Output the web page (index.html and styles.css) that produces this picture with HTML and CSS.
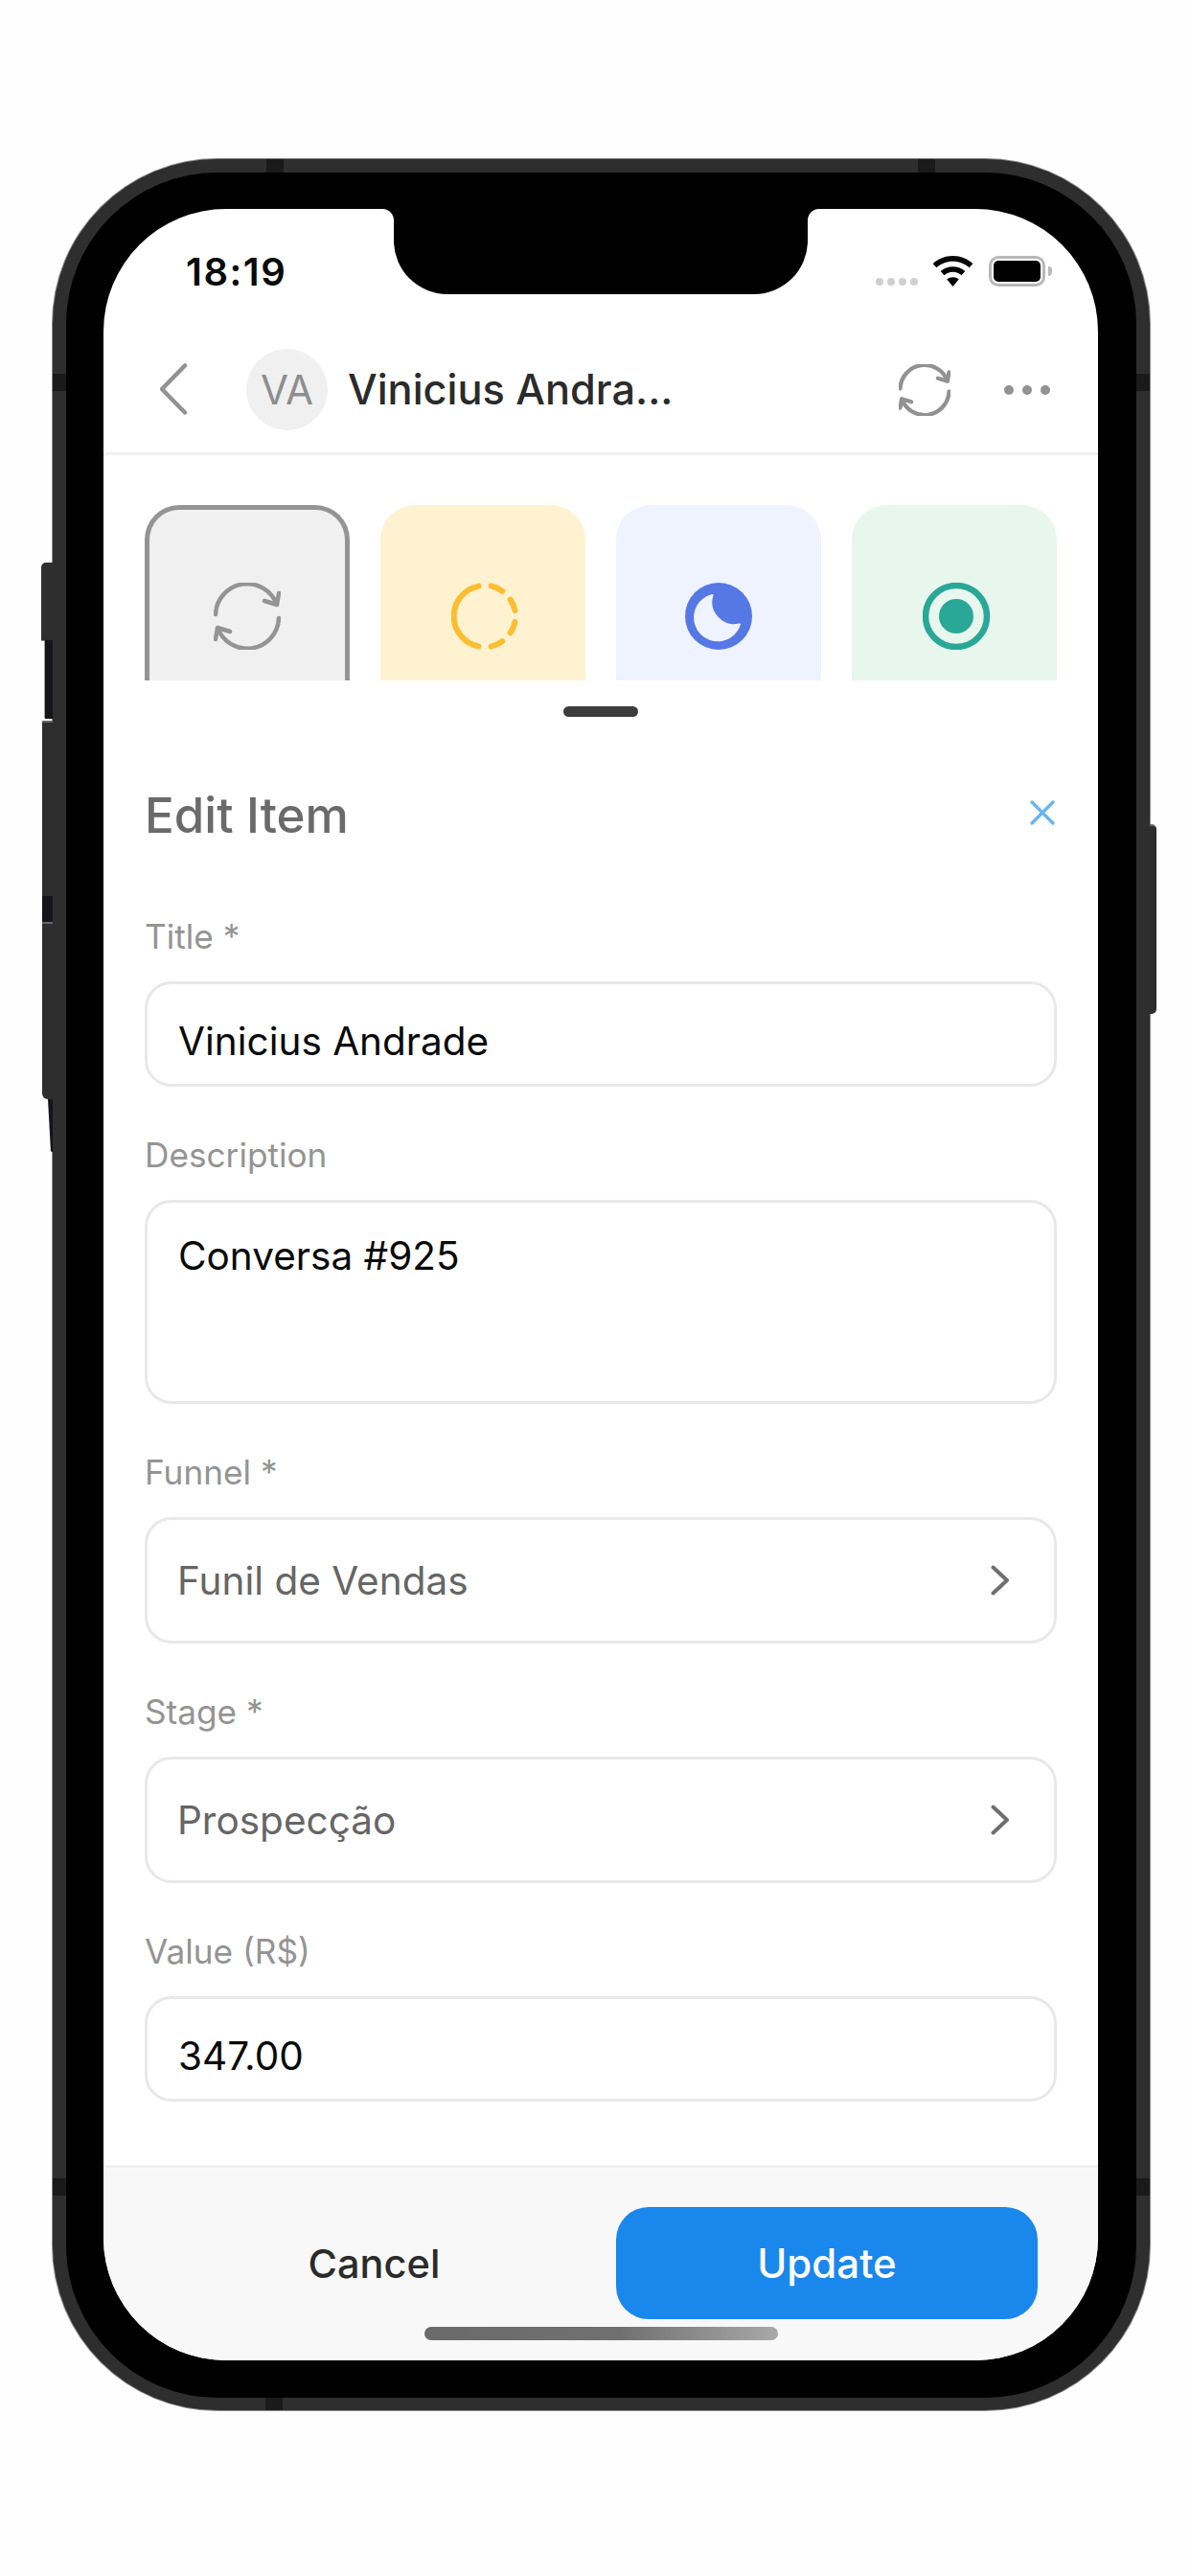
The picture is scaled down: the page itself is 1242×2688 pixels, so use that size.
FILE: index.html
```html
<!DOCTYPE html>
<html lang="en">
<head>
<meta charset="utf-8">
<title>Edit Item</title>
<link rel="stylesheet" href="styles.css">
</head>
<body>
<div class="phone">
  <span class="hw hw-silent"></span>
  <span class="hw hw-up"></span>
  <span class="hw hw-down"></span>
  <span class="hw hw-tail"></span>
  <span class="hw hw-power"></span>
  <span class="band band-tl"></span>
  <span class="band band-tr"></span>
  <span class="band band-bl"></span>
  <span class="band band-lt"></span>
  <span class="band band-lb"></span>
  <span class="band band-rt"></span>
  <span class="band band-rb"></span>
  <div class="screen">
    <div class="notch"></div>
    <div class="status">
      <span class="time">18:19</span>
      <div class="status-icons">
        <span class="signal"><i></i><i></i><i></i><i></i></span>
        <svg class="wifi" viewBox="0 0 44 34"><path d="M22 0C13.5 0 6.2 3.2 0.5 8.4L4.4 12.6C9 8.4 15.2 5.9 22 5.9S35 8.4 39.6 12.6L43.5 8.4C37.8 3.2 30.5 0 22 0Z"/><path d="M22 11.5C16.9 11.5 12.3 13.4 8.8 16.6L12.7 20.8C15.2 18.6 18.4 17.3 22 17.3S28.8 18.6 31.3 20.8L35.2 16.6C31.7 13.4 27.1 11.5 22 11.5Z"/><path d="M22 23C19.6 23 17.3 23.9 15.6 25.3L22 33L28.4 25.3C26.7 23.9 24.4 23 22 23Z"/></svg>
        <span class="battery"><span class="battery-fill"></span></span>
        <span class="battery-nub"></span>
      </div>
    </div>
    <header class="topbar">
      <svg class="back" viewBox="0 0 32 54"><path d="M26 2.500L2 27L26 51.500"/></svg>
      <div class="avatar">VA</div>
      <div class="name">Vinicius Andra...</div>
      <svg class="sync-top" viewBox="0 0 70 70"><path d="M2 33A33 33 0 0 1 66 23M53 19L66 23L68 11"/><path d="M68 37A33 33 0 0 1 4 47M17 51L4 47L2 59"/></svg>
      <div class="dots"><i></i><i></i><i></i></div>
    </header>
    <div class="stages">
      <div class="stage stage-grey">
        <svg class="stage-icon" viewBox="0 0 70 70"><path class="sync" d="M2 33A33 33 0 0 1 66 23M53 19L66 23L68 11"/><path class="sync" d="M68 37A33 33 0 0 1 4 47M17 51L4 47L2 59"/></svg>
      </div>
      <div class="stage stage-yellow">
        <svg class="stage-icon" viewBox="0 0 70 70"><path class="dash" d="M28.500 3.600A32 32 0 0 0 28.500 66.400"/><path class="dash" d="M41.600 3.400A32 32 0 0 1 53.300 8.800"/><path class="dash" d="M61.700 17.700A32 32 0 0 1 66.500 29"/><path class="dash" d="M66.500 41A32 32 0 0 1 61.700 52.300"/><path class="dash" d="M53.300 61.200A32 32 0 0 1 41.600 66.600"/></svg>
      </div>
      <div class="stage stage-blue">
        <svg class="stage-icon" viewBox="0 0 70 70"><circle class="moon-disc" cx="35" cy="35" r="35"/><path class="moon-cut" d="M28.500 13A24 24 0 1 0 57 43.500A24 24 0 0 1 28.500 13Z"/></svg>
      </div>
      <div class="stage stage-green">
        <svg class="stage-icon" viewBox="0 0 70 70"><circle class="target-ring" cx="35" cy="35" r="32"/><circle class="target-dot" cx="35" cy="35" r="18"/></svg>
      </div>
    </div>
    <main class="sheet">
      <div class="handle"></div>
      <div class="sheet-head">
        <h1 class="sheet-title">Edit Item</h1>
        <svg class="close" viewBox="0 0 26 26"><path d="M2 2L24 24M24 2L2 24"/></svg>
      </div>
      <form class="form">
        <div class="field">
          <div class="label">Title *</div>
          <div class="input">Vinicius Andrade</div>
        </div>
        <div class="field">
          <div class="label">Description</div>
          <div class="input textarea">Conversa #925</div>
        </div>
        <div class="field">
          <div class="label">Funnel *</div>
          <div class="input select"><span>Funil de Vendas</span><svg class="chev" viewBox="0 0 20 32"><path d="M2.500 2.500L17 16L2.500 29.500"/></svg></div>
        </div>
        <div class="field">
          <div class="label">Stage *</div>
          <div class="input select"><span>Prospecção</span><svg class="chev" viewBox="0 0 20 32"><path d="M2.500 2.500L17 16L2.500 29.500"/></svg></div>
        </div>
        <div class="field">
          <div class="label">Value (R$)</div>
          <div class="input">347.00</div>
        </div>
      </form>
    </main>
    <footer class="footer">
      <div class="btn-cancel">Cancel</div>
      <div class="btn-update">Update</div>
    </footer>
    <div class="home"></div>
  </div>
</div>
</body>
</html>
```
FILE: styles.css
```css
* { box-sizing: border-box; }
html, body { margin: 0; padding: 0; }
body {
  width: 1242px;
  height: 2688px;
  background: #fefefe;
  font-family: Inter, "Liberation Sans", sans-serif;
  overflow: hidden;
  padding: 166px 0 0 55px;
}
.phone {
  position: relative;
  width: 1145px;
  height: 2349px;
  padding: 38px 40px 39px 39px;
  border: 14px solid #2e2e2e;
  border-bottom-width: 13px;
  border-radius: 172px;
  background: #000;
  box-shadow: 0 0 0 1px #8a8a8a;
}
.hw { position: absolute; background: #2e2e2e; }
.hw-silent { left: -26px; top: 407px; width: 12px; height: 163px; border-radius: 5px 0 0 5px; background: linear-gradient(#2e2e2e 50%, #14141a 50%); clip-path: polygon(0 0, 100% 0, 100% 100%, 30% 100%, 30% 50%, 0 50%); }
.hw-up { left: -25px; top: 572px; width: 11px; height: 210px; border-top: 2px solid #666; background: linear-gradient(#2e2e2e 87%, #14141a 87%); }
.hw-down { left: -25px; top: 782px; width: 11px; height: 185px; border-radius: 0 0 0 6px; border-top: 2px solid #666; }
.hw-tail { left: -19px; top: 967px; width: 5px; height: 55px; background: #14141a; border-radius: 0 0 0 5px; clip-path: polygon(0 0, 100% 0, 100% 100%, 60% 100%); }
.hw-power { right: -21px; top: 680px; width: 7px; height: 198px; border-radius: 0 5px 5px 0; border-top: 2px solid #666; }
.band { position: absolute; background: #1a1a1a; }
.band-tl { left: 209px; top: -14px; width: 18px; height: 14px; }
.band-tr { left: 889px; top: -14px; width: 18px; height: 14px; }
.band-bl { left: 208px; bottom: -13px; width: 18px; height: 13px; }
.band-lt { left: -14px; top: 210px; width: 14px; height: 18px; }
.band-lb { left: -14px; top: 2093px; width: 14px; height: 18px; }
.band-rt { right: -14px; top: 210px; width: 14px; height: 18px; }
.band-rb { right: -14px; top: 2093px; width: 14px; height: 18px; }

.screen {
  position: relative;
  width: 100%;
  height: 100%;
  background: #fff;
  border-radius: 128px;
  overflow: hidden;
  display: flex;
  flex-direction: column;
}
.notch {
  position: absolute;
  left: 303px;
  top: 0;
  width: 432px;
  height: 89px;
  background: #000;
  border-radius: 0 0 56px 56px;
}
.notch::before, .notch::after {
  content: "";
  position: absolute;
  top: 0;
  width: 12px;
  height: 12px;
}
.notch::before { left: -12px; background: radial-gradient(circle at 0 100%, transparent 11.5px, #000 12.5px); }
.notch::after { right: -12px; background: radial-gradient(circle at 100% 100%, transparent 11.5px, #000 12.5px); }
.status {
  height: 132px;
  flex: none;
  display: flex;
  justify-content: space-between;
  align-items: flex-start;
  padding: 43px 48px 0 86px;
}
.time {
  font-size: 40px;
  line-height: 46px;
  font-weight: 600;
  letter-spacing: 1.5px;
  color: #0a0a0a;
}
.status-icons { display: flex; align-items: flex-start; padding-top: 6px; }
.signal { display: flex; gap: 4px; margin-top: 23px; margin-right: 15px; }
.signal i { width: 8px; height: 8px; border-radius: 50%; background: #cfcfcf; }
.wifi { width: 43px; height: 33px; margin-right: 16px; fill: #000; }
.battery {
  width: 59px;
  height: 32px;
  border: 3px solid #b8b8b8;
  border-radius: 10px;
  padding: 2px;
}
.battery-fill { display: block; width: 100%; height: 100%; background: #000; border-radius: 5px; }
.battery-nub { width: 4px; height: 10px; background: #b8b8b8; border-radius: 0 4px 4px 0; margin: 11px 0 0 3px; }

.topbar {
  flex: none;
  height: 125px;
  display: flex;
  align-items: flex-start;
  padding: 14px 50px 0 59px;
  border-bottom: 3px solid #f1f1f1;
}
.back { width: 32px; height: 54px; margin-top: 15px; fill: none; stroke: #929292; stroke-width: 4.5; stroke-linecap: round; stroke-linejoin: round; }
.avatar {
  width: 85px;
  height: 85px;
  margin-left: 58px;
  border-radius: 50%;
  background: #f0f0f0;
  color: #8e8e8e;
  font-size: 42px;
  font-weight: 400;
  display: flex;
  align-items: center;
  justify-content: center;
}
.name {
  flex: 1;
  margin-left: 21px;
  font-size: 43.3px;
  line-height: 85px;
  font-weight: 500;
  color: #2b2b2b;
}
.sync-top { width: 54px; height: 54px; margin-top: 16px; fill: none; stroke: #929292; stroke-width: 5.5; stroke-linecap: round; stroke-linejoin: round; }
.dots { display: flex; gap: 9px; margin: 38px 0 0 56px; }
.dots i { width: 10px; height: 10px; border-radius: 50%; background: #929292; }

.stages {
  flex: none;
  display: flex;
  gap: 32px;
  padding: 52px 43px 0;
}
.stage {
  width: 214px;
  height: 183px;
  border-radius: 36px 36px 0 0;
  display: flex;
  justify-content: center;
  padding-top: 81px;
}
.stage-icon { width: 70px; height: 70px; fill: none; }
.stage-grey { background: #f0f0f0; border: 5px solid #949494; border-bottom: 0; padding-top: 76px; }
.stage-yellow { background: #fff2d1; padding-left: 4px; }
.stage-blue { background: #eff3ff; }
.stage-green { background: #e7f7ee; padding-left: 4px; }
.sync { stroke: #949494; stroke-width: 4.5; stroke-linecap: round; stroke-linejoin: round; }
.dash { stroke: #fdbd30; stroke-width: 6; stroke-linecap: round; }
.moon-disc { fill: #5578e5; }
.moon-cut { fill: #eff3ff; stroke: #eff3ff; stroke-width: 2; stroke-linejoin: round; }
.target-ring { stroke: #2aa897; stroke-width: 6.5; }
.target-dot { fill: #2aa897; }

.sheet {
  flex: 1;
  min-height: 0;
  padding: 27px 43px 0;
  display: flex;
  flex-direction: column;
}
.handle { width: 78px; height: 11px; flex: none; align-self: center; border-radius: 6px; background: #3c3c3c; }
.sheet-head {
  flex: none;
  display: flex;
  justify-content: space-between;
  align-items: center;
  height: 60px;
  margin-top: 72px;
  margin-bottom: 76px;
}
.sheet-title { margin: 0; font-size: 51px; font-weight: 500; color: #6a6a6a; }
.close { width: 26px; height: 26px; margin-right: 2px; margin-top: -5px; fill: none; stroke: #67b4f0; stroke-width: 3.2; stroke-linecap: round; }
.form { display: flex; flex-direction: column; gap: 50px; }
.label { font-size: 35.2px; line-height: 42px; color: #949494; margin-bottom: 26px; }
.input {
  height: 110px;
  border: 3px solid #e8e8e8;
  border-radius: 28px;
  padding: 14px 32px 0;
  display: flex;
  align-items: center;
  font-size: 40.5px;
  color: #0a0a0a;
  background: #fff;
}
.textarea { height: 213px; align-items: flex-start; padding-top: 32px; line-height: 48px; }
.select { height: 132px; justify-content: space-between; padding: 0 46px 0 31px; color: #666; }
.chev { width: 20px; height: 32px; fill: none; stroke: #6f6f6f; stroke-width: 4; stroke-linecap: round; stroke-linejoin: round; }

.footer {
  flex: none;
  height: 204px;
  background: #f8f8f8;
  border-top: 3px solid #f0f0f0;
  display: flex;
  align-items: flex-start;
  padding: 41px 63px 0 0;
}
.btn-cancel {
  flex: 1;
  text-align: center;
  font-size: 41.5px;
  line-height: 118px;
  font-weight: 450;
  color: #2b2b2b;
  padding-left: 30px;
}
.btn-update {
  width: 440px;
  height: 117px;
  border-radius: 34px;
  background: #1a87ec;
  color: #fff;
  font-size: 42px;
  font-weight: 450;
  display: flex;
  align-items: center;
  justify-content: center;
}
.home {
  position: absolute;
  left: 335px;
  top: 2210px;
  width: 369px;
  height: 14px;
  border-radius: 7px;
  background: linear-gradient(90deg, #6a6a6a 0%, #707070 55%, #a8a8a8 100%);
}
```
